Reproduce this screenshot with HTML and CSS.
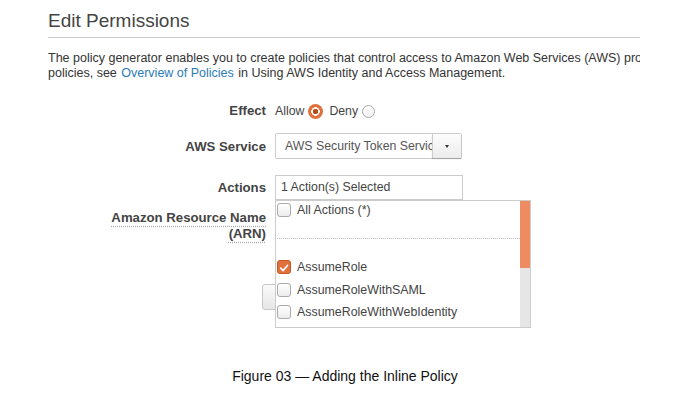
FILE: index.html
```html
<!DOCTYPE html>
<html>
<head>
<meta charset="utf-8">
<link rel="stylesheet" href="styles.css">
</head>
<body>
<div class="page">
  <h1 class="title">Edit Permissions</h1>
  <div class="intro">
    <p class="line">The policy generator enables you to create policies that control access to Amazon Web Services (AWS) products and resources. For more information about creating</p>
    <p class="line">policies, see <a class="link" href="#">Overview of Policies</a> in Using AWS Identity and Access Management.</p>
  </div>
  <div class="form">
    <div class="label row-effect">Effect</div>
    <div class="field row-effect effect">
      <span class="opt">Allow</span><span class="radio checked"></span>
      <span class="opt">Deny</span><span class="radio"></span>
    </div>

    <div class="label row-service">AWS Service</div>
    <div class="field row-service">
      <div class="select">
        <span class="select-text">AWS Security Token Service</span>
        <span class="select-btn"><span class="caret"></span></span>
      </div>
    </div>

    <div class="label row-actions">Actions</div>
    <div class="field row-actions">
      <div class="combo">
        <div class="input">1 Action(s) Selected</div>
        <div class="menu">
          <div class="menu-list">
            <div class="item first"><span class="cb"></span>All Actions (*)</div>
            <div class="sep"></div>
            <div class="item"><span class="cb on"><svg viewBox="0 0 14 14" width="14" height="14"><path d="M3.2 7.2 L6 10 L11 4" fill="none" stroke="#fff" stroke-width="2" stroke-linecap="round" stroke-linejoin="round"/></svg></span>AssumeRole</div>
            <div class="item"><span class="cb"></span>AssumeRoleWithSAML</div>
            <div class="item"><span class="cb"></span>AssumeRoleWithWebIdentity</div>
          </div>
          <div class="scroll"><div class="thumb"></div></div>
        </div>
      </div>
    </div>

    <div class="label row-arn"><span class="abbr">Amazon Resource Name</span><br><span class="abbr">(ARN)</span></div>
    <div class="field row-arn"></div>

    <div class="field row-btn"><span class="btn">Add Statement</span></div>
  </div>
</div>
<p class="caption">Figure 03 — Adding the Inline Policy</p>
</body>
</html>
```
FILE: styles.css
```css
html, body {
  margin: 0;
  padding: 0;
  background: #fff;
}
body {
  width: 690px;
  height: 400px;
  overflow: hidden;
  font-family: "Liberation Sans", Arial, sans-serif;
}
.page {
  margin-left: 48px;
  width: 592px;
}
.title {
  margin: 0;
  padding: 10px 0 5px;
  font-size: 19px;
  line-height: 22px;
  font-weight: normal;
  color: #444;
  border-bottom: 1px solid #ccc;
}
.intro {
  margin-top: 13px;
  overflow: hidden;
}
.line {
  margin: 0;
  white-space: nowrap;
  font-size: 12.5px;
  line-height: 15px;
  color: #333;
}
.link {
  color: #2b7bb9;
  text-decoration: none;
  margin: 0 1px;
}
.form {
  display: grid;
  grid-template-columns: 218px 1fr;
  column-gap: 9px;
}
.label {
  text-align: right;
  font-weight: bold;
  font-size: 13.2px;
  color: #444;
}
.row-effect {
  margin-top: 20px;
  height: 20px;
  line-height: 20px;
}
.effect {
  display: flex;
  align-items: center;
  font-size: 12.3px;
  color: #444;
}
.opt {
  margin-right: 4px;
}
.radio {
  width: 13px;
  height: 13px;
  border-radius: 50%;
  border: 1px solid #aaa;
  background: linear-gradient(#fff, #f0f0f0);
  margin-right: 6px;
  box-sizing: border-box;
}
.radio.checked {
  border: none;
  width: 15px;
  height: 15px;
  background: radial-gradient(circle, #b94e1d 0 2.5px, #fff 3px 4px, #e0713d 4.5px);
}
.row-service {
  margin-top: 12px;
  height: 26px;
  line-height: 28px;
}
.select {
  width: 187px;
  height: 26px;
  box-sizing: border-box;
  border: 1px solid #ccc;
  border-radius: 2px;
  display: flex;
  background: #fff;
}
.select-text {
  flex: 1;
  overflow: hidden;
  white-space: nowrap;
  padding-left: 9px;
  font-size: 12.3px;
  line-height: 24px;
  color: #555;
}
.select-btn {
  width: 28px;
  border-left: 1px solid #ccc;
  background: linear-gradient(#fdfdfd, #ececec);
  display: flex;
  align-items: center;
  justify-content: center;
  box-shadow: 0 1px 1px rgba(0,0,0,0.2);
}
.caret {
  width: 0;
  height: 0;
  border-left: 2.5px solid transparent;
  border-right: 2.5px solid transparent;
  border-top: 3px solid #333;
}
.row-actions {
  margin-top: 16px;
  height: 25px;
  line-height: 26px;
}
.combo {
  position: relative;
  width: 188px;
}
.input {
  height: 25px;
  box-sizing: border-box;
  border: 1px solid #ccc;
  padding-left: 5px;
  font-size: 12.3px;
  line-height: 23px;
  color: #444;
  background: #fff;
}
.menu {
  position: absolute;
  left: 0;
  top: 25px;
  width: 256px;
  height: 128px;
  box-sizing: border-box;
  border: 1px solid #ccc;
  background: #fff;
  display: flex;
  z-index: 2;
  line-height: normal;
}
.menu-list {
  flex: 1;
  padding-left: 1px;
  overflow: hidden;
}
.item {
  display: flex;
  align-items: center;
  height: 22.5px;
  font-size: 12.4px;
  color: #444;
}
.item.first {
  height: 20px;
  align-items: flex-start;
  padding-top: 2px;
  box-sizing: border-box;
}
.sep {
  margin-top: 17px;
  margin-bottom: 17px;
  border-top: 1px dotted #bbb;
}
.cb {
  width: 14px;
  height: 14px;
  box-sizing: border-box;
  border: 1px solid #aaa;
  border-radius: 3px;
  background: linear-gradient(#fff, #ececec);
  margin-right: 6px;
  flex: none;
  display: flex;
}
.item.first .cb {
  margin-top: 0;
}
.cb.on {
  border: 1px solid #c9551f;
  background: #e0713d;
}
.scroll {
  width: 10px;
  background: #e6e6e6;
}
.thumb {
  height: 67px;
  background: #ef8b61;
}
.row-arn {
  margin-top: 10px;
  line-height: 16px;
}
.abbr {
  text-decoration: underline dotted #aaa;
  text-underline-offset: 4px;
}
.row-btn {
  grid-column: 2;
  margin-top: 42px;
  height: 26px;
}
.btn {
  display: inline-block;
  margin-left: -13px;
  height: 26px;
  line-height: 24px;
  box-sizing: border-box;
  padding: 0 12px;
  border: 1px solid #c8c8c8;
  border-radius: 3px;
  background: linear-gradient(#fafafa, #e6e6e6);
  font-size: 12px;
  color: #444;
}
.caption {
  margin: 58px 0 0;
  text-align: center;
  font-size: 14px;
  line-height: 16px;
  color: #111;
}
```
